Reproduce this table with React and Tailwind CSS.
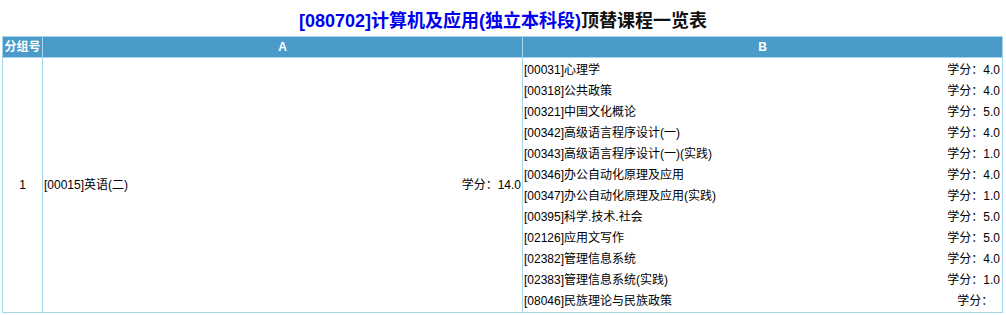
export default function App() {
  const b = [
    ["[00031]心理学", "4.0"],
    ["[00318]公共政策", "4.0"],
    ["[00321]中国文化概论", "5.0"],
    ["[00342]高级语言程序设计(一)", "4.0"],
    ["[00343]高级语言程序设计(一)(实践)", "1.0"],
    ["[00346]办公自动化原理及应用", "4.0"],
    ["[00347]办公自动化原理及应用(实践)", "1.0"],
    ["[00395]科学.技术.社会", "5.0"],
    ["[02126]应用文写作", "5.0"],
    ["[02382]管理信息系统", "4.0"],
    ["[02383]管理信息系统(实践)", "1.0"],
    ["[08046]民族理论与民族政策", "\u00a0\u00a0"],
  ];
  const font = { fontFamily: '"Liberation Sans", "Noto Sans CJK SC", sans-serif' };
  return (
    <div className="w-[1006px] bg-white text-black" style={font}>
      <div className="h-[36px] pt-[9px] text-center text-[18px] font-bold leading-[24px]">
        <span className="text-[#0000ee]">[080702]计算机及应用(独立本科段)</span>
        <span className="text-[#111]">顶替课程一览表</span>
      </div>
      <table className="ml-[2px] w-[1001px] table-fixed border-collapse border border-[#a6d6ec] text-[12px]">
        <colgroup>
          <col className="w-[40px]" />
          <col className="w-[480px]" />
          <col />
        </colgroup>
        <thead>
          <tr className="h-[21px] bg-[#4a9bc9] text-white font-bold">
            <th className="border border-[#a6d6ec] p-0 leading-[19px]">分组号</th>
            <th className="border border-[#a6d6ec] p-0 leading-[19px]">A</th>
            <th className="border border-[#a6d6ec] p-0 leading-[19px]">B</th>
          </tr>
        </thead>
        <tbody>
          <tr>
            <td className="border border-[#a6d6ec] p-0 text-center align-middle">1</td>
            <td className="border border-[#a6d6ec] px-[1px] py-0 align-middle">
              <div className="flex justify-between leading-[21px]">
                <span>[00015]英语(二)</span>
                <span>学分：14.0</span>
              </div>
            </td>
            <td className="border border-[#a6d6ec] pl-[1px] pr-[2px] pt-[2px] pb-0 align-top">
              {b.map(([n, c], i) => (
                <div key={i} className="flex h-[21px] justify-between leading-[21px]">
                  <span>{n}</span>
                  <span>学分：{c}</span>
                </div>
              ))}
            </td>
          </tr>
        </tbody>
      </table>
    </div>
  );
}
